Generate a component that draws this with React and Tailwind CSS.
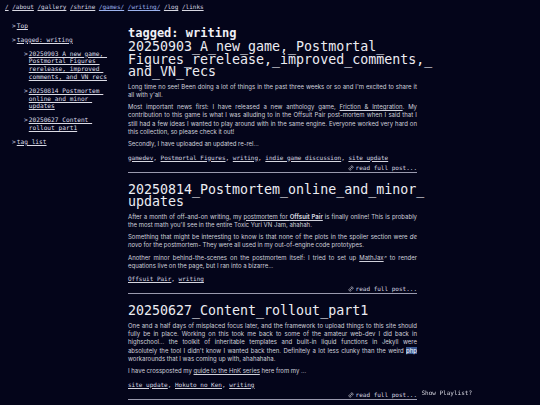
import { Link2 } from 'lucide-react'

const mono = { fontFamily: '"DejaVu Sans Mono", "Liberation Mono", monospace' }

const navLinks = ['/', '/about', '/gallery', '/shrine', '/games/', '/writing/', '/log', '/links']
const activeNav = ['/games/', '/writing/']

const sidePosts = [
  ['20250903_A_new_game,_', 'Postmortal_Figures_', 'rerelease,_improved_', 'comments,_and_VN_recs'],
  ['20250814_Postmortem_', 'online_and_minor_', 'updates'],
  ['20250627_Content_', 'rollout_part1']
]

// each paragraph is a list of its lines, as they break in the layout
const posts = [
  {
    title: ['20250903_A_new_game,_Postmortal_', 'Figures_rerelease,_improved_comments,_', 'and_VN_recs'],
    body: [
      [
        <>Long time no see! Been doing a lot of things in the past three weeks or so and I'm excited to share it</>,
        <>all with y'all.</>
      ],
      [
        <>Most important news first: I have released a new anthology game, <u>Friction &amp; Integration</u>. My</>,
        <>contribution to this game is what I was alluding to in the Offsuit Pair post-mortem when I said that I</>,
        <>still had a few ideas I wanted to play around with in the same engine. Everyone worked very hard on</>,
        <>this collection, so please check it out!</>
      ],
      [<>Secondly, I have uploaded an updated re-rel...</>]
    ],
    tags: ['gamedev', 'Postmortal Figures', 'writing', 'indie game discussion', 'site update']
  },
  {
    title: ['20250814_Postmortem_online_and_minor_', 'updates'],
    body: [
      [
        <>After a month of off-and-on writing, my <u>postmortem for <b>Offsuit Pair</b></u> is finally online! This is probably</>,
        <>the most math you'll see in the entire Toxic Yuri VN Jam, ahahah.</>
      ],
      [
        <>Something that might be interesting to know is that none of the plots in the spoiler section were <i>de</i></>,
        <><i>novo</i> for the postmortem- They were all used in my out-of-engine code prototypes.</>
      ],
      [
        <>
          Another minor behind-the-scenes on the postmortem itself: I tried to set up <u>MathJax</u>
          <span className="text-[4px] align-top">↗</span> to render
        </>,
        <>equations live on the page, but I ran into a bizarre...</>
      ]
    ],
    tags: ['Offsuit Pair', 'writing']
  },
  {
    title: ['20250627_Content_rollout_part1'],
    body: [
      [
        <>One and a half days of misplaced focus later, and the framework to upload things to this site should</>,
        <>fully be in place. Working on this took me back to some of the amateur web-dev I did back in</>,
        <>highschool... the toolkit of inheritable templates and built-in liquid functions in Jekyll were</>,
        <>
          absolutely the tool I didn't know I wanted back then. Definitely a lot less clunky than the weird{' '}
          <span className="bg-[#3b5a94] text-white">php</span>
        </>,
        <>workarounds that I was coming up with, ahahahaha.</>
      ],
      [<>I have crossposted my <u>guide to the HnK series</u> here from my ...</>]
    ],
    tags: ['site update', 'Hokuto no Ken', 'writing']
  }
]

function Post({ post, first }) {
  return (
    <article className={`border-b border-[#9a9aae] ${first ? 'mt-[1px]' : 'mt-[11px]'}`}>
      <h2 className="text-[13.3px] leading-[12.5px] text-[#ececf2]" style={mono}>
        {post.title.map((line, i) => (
          <span key={i}>
            {line}
            {i < post.title.length - 1 && <br />}
          </span>
        ))}
      </h2>
      <div
        className="mt-[4px] text-[6px] leading-[8.3px] text-[#cfd0da]"
        style={{ fontFamily: 'Inter, "Noto Sans", sans-serif' }}
      >
        {post.body.map((lines, i) => (
          <p key={i} className="mb-[4px]">
            {lines.map((line, j) => (
              <span
                key={j}
                className={`block ${j < lines.length - 1 ? 'text-justify [text-align-last:justify]' : ''}`}
              >
                {line}
              </span>
            ))}
          </p>
        ))}
      </div>
      <div className="mt-[5px] text-[6px] leading-[8px] text-[#d6d6e0]" style={mono}>
        {post.tags.map((t, i) => (
          <span key={t}>
            <u>{t}</u>
            {i < post.tags.length - 1 && ', '}
          </span>
        ))}
      </div>
      <div className="mt-[2px] flex justify-end items-center gap-[2px] text-[6px] leading-[8px] text-[#d6d6e0]" style={mono}>
        <Link2 size={6} strokeWidth={2.5} className="-rotate-45" />
        <span>read full post...</span>
      </div>
    </article>
  )
}

export default function App() {
  return (
    <div className="min-h-screen bg-[#04051a] text-[#e2e2ea]">
      <nav className="px-[5px] pt-[3px] text-[6px] leading-[8px] flex gap-[3.6px]" style={mono}>
        {navLinks.map((l) => (
          <a key={l} className={`underline ${activeNav.includes(l) ? 'text-[#9db3ee]' : 'text-[#d8d8e2]'}`}>
            {l}
          </a>
        ))}
      </nav>

      <div className="flex">
        {/* Sidebar */}
        <aside className="w-[128px] shrink-0 pl-[12px] pt-[11px] text-[6.2px] leading-[7.8px] text-[#dcdce6]" style={mono}>
          <ul className="space-y-[6px]">
            <li className="flex gap-[1px]">
              <span>&gt;</span>
              <u>Top</u>
            </li>
            <li>
              <div className="flex gap-[1px]">
                <span>&gt;</span>
                <u>tagged: writing</u>
              </div>
              <ul className="pl-[12px] mt-[6px] space-y-[6px]">
                {sidePosts.map((lines, i) => (
                  <li key={i} className="flex gap-[1px]">
                    <span>&gt;</span>
                    <u>
                      {lines.map((line, j) => (
                        <span key={j}>
                          {line}
                          {j < lines.length - 1 && <br />}
                        </span>
                      ))}
                    </u>
                  </li>
                ))}
              </ul>
            </li>
            <li className="flex gap-[1px]">
              <span>&gt;</span>
              <u>tag list</u>
            </li>
          </ul>
        </aside>

        {/* Posts */}
        <main className="w-[289px] shrink-0 pt-[15px]">
          <h1 className="text-[12px] leading-[14px] font-bold text-[#f0f0f5]" style={mono}>
            tagged: writing
          </h1>
          {posts.map((p, i) => (
            <Post key={i} post={p} first={i === 0} />
          ))}
        </main>
      </div>

      <div className="fixed right-[68px] bottom-[8px] text-[6px] text-[#d6d6e0]" style={mono}>
        Show Playlist?
      </div>
    </div>
  )
}
